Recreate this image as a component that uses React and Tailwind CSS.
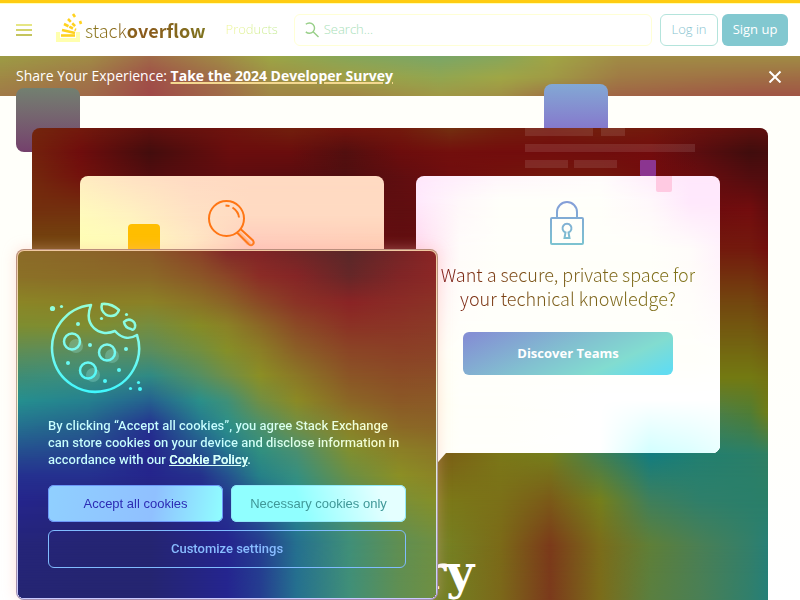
import React from "react";

// Each mesh is a list of rows; every row is [y in pixels, colours] and shares the column positions in `xs` (percent).
const pct = (list, from, size) => list.map((v) => ((v - from) / size) * 100);

const HERO = {
  xs: pct([32, 80, 150, 230, 290, 345, 400, 450, 500, 550, 600, 650, 700, 750, 768], 32, 736),
  rows: [
    [0, "73260d 731a0d 5f100e 6f140e 72200d 73140d 731a0d 733010 73200d 73180d 73200d 731a0d 6a120e 5f100e 5f0f0e"],
    [24, "73220d 6f0d0d 430d0d 6a0d0d 6a0d0d 520f0f 6c0d0d 730f0d 730d0d 730d0d 700d0d 730c0d 5a0d0f 400d0d 450d0d"],
    [48, "73280d 73120d 520d0f 600d0f 5a0d0f 500f10 600e10 700e0f 73120d 73180d 73180d 730c0d 680d0f 520d0f 500d0f"],
    [82, "73300e 73300e 73120d 600d0f 600d0f 600d10 5f0e10 650e10 700e0f 73120d 73180d 730c0d 6c0c0e 730d0e 600d0e"],
    [122, "734a0f 734a0f 73300e 73100e 70100e 680f10 620e10 6a0f10 730f0f 731a0d 731a0d 731a0d 731a0d 731a0e 730f0e"],
    [172, "73600f 73600f 73500f 73400f 73300f 73200f 73200f 73300f 73400f 73400f 73400f 73400f 73450f 73450f 73380f"],
    [250, "737a12 737a12 737a12 737a12 737a12 737012 736012 736012 737012 737a12 737a12 737a12 737a12 737a12 737212"],
    [285, "7b7018 7b7018 7b7018 7b7018 7b7018 7b6018 7b5818 7b5a14 7b7018 7b7f18 607f30 4a7f50 4a7f50 4f7d35 6f7d18"],
    [326, "7b7018 7b7018 7b7018 7b7018 7b6018 7b5018 7b5514 7b6016 7b7718 757f1c 427f52 127d80 227f70 2a7f68 307f62"],
    [372, "7b7f18 7b7f18 7b7f18 7b7f18 7b7f18 7b7018 7b7018 7b7818 7b7018 7b5a18 757f1c 3f7f5c 2f7f6a 2a7f6a 2a7f68"],
    [417, "6a7f28 6a7f28 6a7f28 6a7f28 6a7f28 6a7f28 607f30 757f22 7b6a18 7b3a1a 7b6c1a 5f7f38 4a7f55 337f6a 277f76"],
    [472, "6a7f28 6a7f28 6a7f28 6a7f28 6a7f28 6a7f28 607f30 747f22 7b681a 7b3a1c 7b6c1a 5a7f40 4a7f55 307f6c 257f78"],
  ],
};

const COOKIE = {
  xs: pct([17, 87, 150, 200, 227, 260, 297, 350, 400, 437], 17, 420),
  rows: [
    [0, "8b6b28 8b6528 8b5a28 8b4028 822828 802526 702627 5a2829 752526 8b2525"],
    [25, "8b7027 8b6b27 8b6827 8b5527 8b4527 8b2c26 852526 652728 802526 8b2726"],
    [52, "8b8626 8b8026 8b8226 8b7226 8b6427 8b4a26 8b3326 8b2425 8b2c26 8b3226"],
    [75, "7e8d30 808d30 758d40 868b25 8b8226 8b6826 8b4a26 8b3225 8b3526 8b3a27"],
    [100, "5f8d55 5a8d60 5a8d5e 728f40 858f28 8b7f26 8b6027 8b4526 8b4026 8b4227"],
    [125, "3f8d75 3a8f80 2f8a85 558f62 6f8f48 8b8f25 8b7826 8b5526 8b4c26 8b4e27"],
    [150, "258f8f 25808f 25608f 2a8f8a 3f9078 708f45 8b8a25 8b6626 8b5826 8b5a27"],
    [175, "25708f 25608c 253090 25758f 2a8f8a 4a906c 708f45 8b8026 8b6826 8b6427"],
    [200, "254f8f 25458f 25258c 25508f 25758f 308f80 4a8f70 808f30 8b8026 8b7726"],
    [225, "25308f 25308f 25258c 25308c 25508f 258088 358f80 6a8f45 8b8f25 8b8426"],
    [250, "25258c 25257f 25257a 25258c 25358f 25608f 258f8f 558f60 7a8f38 858f28"],
    [290, "25257a 252574 252572 252584 25258f 253d90 25708f 408f78 608f52 6f8f42"],
    [350, "252572 252570 252570 252584 25258f 253d90 25708f 408f78 608f52 6f8f42"],
  ],
};

const BANNER = {
  xs: pct([0, 90, 150, 220, 270, 350, 440, 500, 550, 620, 750, 800], 0, 800),
  rows: [
    [0, "9c9c45 a08c45 a06a48 a08a45 9ca645 85a65a 7aa668 86a65c a0a645 a08c45 a08c45 a08c45"],
    [22, "a08845 a07548 a04f48 a07048 a09045 a0a045 92a650 a0a645 a09a45 a07a45 a06f45 a06c45"],
    [40, "a07a48 a06a48 a04a48 a06a48 a08545 a08545 a09845 a09045 a07445 a06445 a05545 a05545"],
  ],
};

const ANSWER_CARD = {
  xs: pct([80, 130, 190, 250, 384], 80, 304),
  rows: [
    [0, "ffecc2 ffe2c4 ffdbc4 ffdac2 ffdac2"],
    [40, "fffbbc fff2c0 ffe2c4 ffdac2 ffdac2"],
    [74, "ffffb4 ffffb8 ffecc4 ffc8bc ffccb4"],
    [277, "ffffb4 ffffb4 ffffb4 ffdbc4 ffdbc4"],
  ],
};

const TEAMS_CARD = {
  xs: pct([416, 460, 500, 600, 650, 690, 720], 416, 304),
  rows: [
    [0, "ffe8fc ffeffc fff6fb fffcfc ffeefc ffe8fc ffe8fc"],
    [26, "ffe8fc fff8fa fffffa fffffa fff8fb ffe8fc ffe8fc"],
    [74, "ffd8ec fffcfa fffffa fffffa fffffa fffcfa fff2fb"],
    [180, "fffff0 fffffa fffffa fffffa fffffa fffffa fffffc"],
    [224, "ffffe8 fffffa fffffa ffffff ffffff ffffff ffffff"],
    [277, "fffff0 fffffa fffffa ffffff d2ffff dcffff e8ffff"],
  ],
};

function Mesh({ xs, rows }) {
  return (
    <div aria-hidden="true" className="absolute inset-0 -z-10 overflow-hidden rounded-[inherit]">
      {rows.map(([y, colours], i) => {
        const stops = colours.split(" ").map((c, k) => `#${c} ${xs[k]}%`).join(", ");
        const mask = i === 0 ? "none" : `linear-gradient(to bottom, transparent ${rows[i - 1][0]}px, black ${y}px)`;
        return (
          <div
            key={y}
            className="absolute inset-0"
            style={{ backgroundImage: `linear-gradient(to right, ${stops})`, maskImage: mask }}
          />
        );
      })}
    </div>
  );
}

function Logo() {
  return (
    <a href="#" aria-label="Stack Overflow" className="flex h-8 items-end">
      <svg width="28" height="32" viewBox="0 0 28 32" fill="none">
        <path d="M2 20v8h20v-8" stroke="#ffffae" strokeWidth="4" />
        <g stroke="#ffd21f" strokeWidth="2.600">
          <path d="M5 23.500h14" />
          <path d="M6 18l13 3" />
          <path d="M8 12l12 6" strokeDasharray="5 1 4 2" />
          <path d="M12 7l8 8" strokeDasharray="4 2" />
          <path d="M17 2l2 3M24 9l1 3" />
        </g>
      </svg>
      <span className="bg-linear-to-r from-[#8a7a1c] via-[#8a5a1c] via-50% to-[#7f7420] bg-clip-text pl-px font-['Noto_Sans_CJK_SC','Open_Sans',sans-serif] text-lg leading-7 text-transparent">
        <span className="font-light">stack</span>
        <span className="font-bold">overflow</span>
      </span>
    </a>
  );
}

function Header() {
  return (
    <header className="flex h-14 items-center border-t-3 border-[#ffcc12] bg-white text-[13px] shadow-[inset_0_1px_0_#ffffb8]">
      <button type="button" aria-label="Menu" className="flex h-12 w-12 flex-col items-center justify-center gap-[3px]">
        <span className="h-0.5 w-4 bg-[#e6e684]" />
        <span className="h-0.5 w-4 bg-[#d4d46c]" />
        <span className="h-0.5 w-4 bg-[#c4c45e]" />
      </button>
      <div className="-mt-1 pl-2">
        <Logo />
      </div>
      <a href="#" className="ml-3 px-2 bg-linear-to-r from-[#f6f690] to-[#b8e890] bg-clip-text font-light text-transparent">
        Products
      </a>
      <label className="ml-2 flex h-8 flex-1 items-center rounded-md border border-[#ffffd6] pl-2">
        <svg width="18" height="18" viewBox="0 0 18 18" fill="none" stroke="#98cf88" strokeWidth="1.500">
          <path d="M3 3a5.500 5.500 0 1 1 0 8M10.500 10.500l6 6" />
        </svg>
        <input
          type="text"
          aria-label="Search"
          placeholder="Search…"
          className="ml-1 w-full min-w-0 bg-transparent font-light outline-none placeholder:text-[#a8e0b8]"
        />
      </label>
      <div className="flex gap-1 pr-3 pl-2">
        <button type="button" className="h-8 w-[58px] rounded-md border border-[#b4e4dc] font-light text-[#88c4d0]">
          Log in
        </button>
        <button type="button" className="h-8 w-[66px] rounded-md bg-[#82c8d0] font-medium text-white">
          Sign up
        </button>
      </div>
    </header>
  );
}

function SurveyBanner() {
  return (
    <div className="relative isolate flex h-10 items-center justify-between px-4 text-sm text-white">
      <Mesh {...BANNER} />
      <p>
        Share Your Experience:{" "}
        <a href="#" className="font-bold underline decoration-[#f4d890] decoration-2">
          Take the 2024 Developer Survey
        </a>
      </p>
      <button type="button" aria-label="Dismiss" className="p-0.5">
        <svg width="14" height="14" viewBox="0 0 14 14" stroke="#fff" strokeWidth="2">
          <path d="M1.500 2.500l11 11M12.500 2.500l-11 11" />
        </svg>
      </button>
    </div>
  );
}

function Hero() {
  return (
    <main className="relative px-8 pt-8">
      <div className="absolute -top-2 left-4 h-16 w-16 rounded-lg bg-linear-to-b from-[#728070] to-[#74406c]" />
      <div className="absolute -top-3 right-48 h-16 w-16 rounded-lg bg-linear-to-b from-[#82a8d4] to-[#8462c8]" />
      <section className="relative isolate rounded-t-lg px-12 pt-12 pb-16">
        <Mesh {...HERO} />
        <svg aria-hidden="true" className="absolute top-0 right-[72px]" width="172" height="40" fill="#fff" fillOpacity=".1">
          <path d="M1 0h68v8H1zM77 0h24v8H77zM1 16h170v8H1zM1 32h43v8H1zM50 32h43v8H50z" />
        </svg>
        <div className="absolute top-8 right-28 h-4 w-4 rounded-[1px] bg-[#8b3590]" />
        <div className="grid grid-cols-2 gap-8">
          <article className="relative isolate h-[277px] rounded-lg">
            <Mesh {...ANSWER_CARD} />
            <div className="absolute top-12 left-12 h-8 w-8 rounded-sm bg-[#ffbe00]" />
            <svg className="mx-auto mt-6" width="48" height="48" viewBox="0 0 48 48" fill="none" stroke="#ff7614" strokeWidth="2">
              <path d="M29 34l10 11 5-1-12-13z" fill="#ff7614" fillOpacity=".25" stroke="none" />
              <circle cx="18.500" cy="18.500" r="17.500" />
              <path d="M29 32.500l12 12c3 2 6-1 4-4L32.500 29M24.500 7.500q6 4 6.500 10M17.500 5.500l4 .5" />
            </svg>
          </article>
          <article className="relative isolate flex h-[277px] flex-col items-center rounded-lg pt-6">
            <Mesh {...TEAMS_CARD} />
            <div className="absolute top-0 right-12 h-4 w-4 rounded-b-[2px] bg-[#ffcae2]" />
            <svg width="36" height="46" viewBox="0 0 36 46" fill="none" strokeWidth="2">
              <defs>
                <linearGradient id="lock" gradientUnits="userSpaceOnUse" x1="0" y1="0" x2="0" y2="46">
                  <stop stopColor="#849cd8" />
                  <stop offset="1" stopColor="#7cc4d0" />
                </linearGradient>
              </defs>
              <g stroke="url(#lock)">
                <rect x="1" y="18" width="32" height="26" rx="1" />
                <path d="M7 18v-6a10 10 0 0 1 20 0v6M15.500 32.500a4.500 4.500 0 1 1 3 0l1 5.500h-5z" />
              </g>
            </svg>
            <h2 className="mt-4 bg-linear-to-r from-[#7a1010] via-[#7a5a18] via-40% to-[#807418] bg-clip-text pb-2 text-center font-['Noto_Sans_CJK_SC','Open_Sans',sans-serif] text-lg leading-6 font-light text-transparent">
              Want a secure, private space for
              <br />
              your technical knowledge?
            </h2>
            <a
              href="#"
              className="mt-3.5 flex h-[43px] w-[210px] items-center justify-center rounded-md bg-[linear-gradient(155deg,#8490d4_5%,#82c0d0_45%,#82dcd0_72%,#62dcf0_95%)] text-[13px] font-bold text-white"
            >
              Discover Teams
            </a>
            <svg aria-hidden="true" className="absolute top-full left-4" width="14" height="16" fill="#fffff8">
              <path d="M0 0h14L0 16z" />
            </svg>
          </article>
        </div>
        <h1 className="mt-[83px] text-center font-['DejaVu_Serif',serif] text-5xl leading-[72px] font-bold text-white">
          Every
        </h1>
      </section>
    </main>
  );
}

function CookieArt() {
  return (
    <svg width="96" height="96" viewBox="0 0 96 96" fill="none" strokeWidth="2.500">
      <defs>
        <linearGradient id="crumb" gradientUnits="userSpaceOnUse" x1="0" y1="0" x2="0" y2="96">
          <stop stopColor="#96ffd4" />
          <stop offset=".5" stopColor="#7cfaf0" />
          <stop offset="1" stopColor="#3cf8ff" />
        </linearGradient>
      </defs>
      <g fill="#9ce8dc" fillOpacity=".3">
        <circle cx="28" cy="47" r="7" />
        <circle cx="64" cy="57" r="7" />
        <circle cx="45" cy="76" r="7" />
      </g>
      <g stroke="url(#crumb)" strokeLinejoin="round">
        <path d="M43 6A43.500 43.500 0 1 0 89 36C81 41 73 39 67 32C51 39 35 26 43 6Z" />
        <circle cx="24" cy="42.500" r="8" />
        <circle cx="59" cy="53.500" r="8" />
        <circle cx="40" cy="71.500" r="8" />
        <path d="M54 5q9-1 17 6c-3 8-13 8-17 0q-1-3 0-6zM76 23c5-5 12-1 11 5q-1 4-4 2-6-1-7-7z" />
      </g>
      <g fill="url(#crumb)">
        <circle cx="4.500" cy="9.500" r="2.600" />
        <circle cx="13.500" cy="7.500" r="1.600" />
        <circle cx="30" cy="25" r="2" />
        <circle cx="53.500" cy="19.500" r="1.600" />
        <circle cx="78.500" cy="15.500" r="1.600" />
        <circle cx="42" cy="46" r="2" />
        <circle cx="78" cy="50" r="2" />
        <circle cx="20" cy="64" r="2" />
        <circle cx="71" cy="71" r="2" />
        <circle cx="57" cy="82" r="2" />
        <circle cx="90.500" cy="83.500" r="1.600" />
        <circle cx="82.500" cy="89.500" r="1.600" />
        <circle cx="92" cy="90" r="2" />
      </g>
    </svg>
  );
}

function CookieDialog() {
  return (
    <div
      role="dialog"
      aria-label="Cookie consent"
      className="fixed bottom-0 left-4 isolate w-[422px] rounded-lg bg-linear-to-b from-[#f0c8a0] via-[#f0f8d0] via-40% to-[#c8c8ff] p-8 font-['Liberation_Sans',Arial,sans-serif] text-[13px] shadow-[0_0_14px_rgba(255,180,170,0.4),inset_0_0_0_1px_rgba(120,70,80,0.45)]"
    >
      <div className="absolute inset-0.5 isolate -z-10 rounded-[6px]">
        <Mesh {...COOKIE} />
      </div>
      <div className="pt-[18px] pb-[22px]">
        <CookieArt />
      </div>
      <p className="bg-linear-to-r from-[#c8ffff] via-[#c8ffff] via-50% to-[#ffffc8] bg-clip-text font-['Roboto',sans-serif] leading-[17px] font-medium text-transparent">
        By clicking “Accept all cookies”, you agree Stack Exchange can store cookies on your device and disclose
        information in accordance with our{" "}
        <a href="#" className="text-[#d8fff8] underline">
          Cookie Policy
        </a>
        .
      </p>
      <div className="mt-[17px] grid grid-cols-2 gap-2">
        <button
          type="button"
          className="h-[37px] rounded-md bg-[linear-gradient(100deg,#90d0ff,#90c0ff_60%,#90ffff)] text-[#2c2cb4] shadow-[inset_0_0_0_1px_#6c98f8]"
        >
          Accept all cookies
        </button>
        <button
          type="button"
          className="h-[37px] rounded-md bg-[linear-gradient(70deg,#90ffff_40%,#e4ffff_85%)] text-[#409898] shadow-[inset_0_0_0_1px_#90e8f8]"
        >
          Necessary cookies only
        </button>
        <button
          type="button"
          className="col-span-2 h-[38px] rounded-md border border-[#80bcff] font-['Roboto',sans-serif] font-medium text-[#88bcff]"
        >
          Customize settings
        </button>
      </div>
    </div>
  );
}

export default function App() {
  return (
    <div className="h-screen overflow-hidden bg-linear-to-b from-[#fffffa] via-[#fffffa] via-60% to-white font-['Open_Sans','Noto_Sans',sans-serif]">
      <Header />
      <SurveyBanner />
      <Hero />
      <CookieDialog />
    </div>
  );
}
